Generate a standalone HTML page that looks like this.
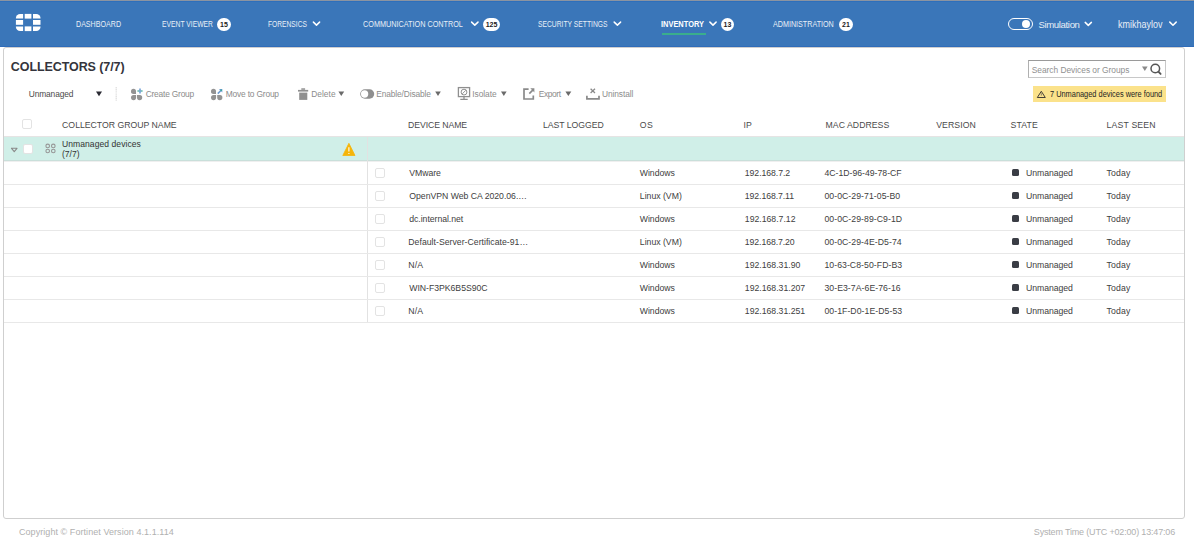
<!DOCTYPE html>
<html><head><meta charset="utf-8">
<style>
*{margin:0;padding:0;box-sizing:border-box}
html,body{width:1194px;height:540px;overflow:hidden;background:#fff;font-family:"Liberation Sans",sans-serif;color:#333}
.a{position:absolute;white-space:nowrap;line-height:1;transform-origin:0 0}
.s{position:absolute;display:block}
.badge{position:absolute;height:13px;border-radius:7px;background:#fff;color:#222;font-size:7px;font-weight:bold;text-align:center;line-height:13px;top:18px}
.cb{position:absolute;width:10px;height:10px;border:1px solid #e3e3e3;border-radius:2px;background:#fff}
.rl{position:absolute;left:4px;width:1180px;height:1px;background:#e8e8e8}
.sq{position:absolute;left:1012px;width:7px;height:7px;border-radius:1.5px;background:#3a3d45}
</style></head><body>
<div class="s" style="left:0;top:0;width:1194px;height:1px;background:#8b94a1"></div>
<div class="s" style="left:0;top:1px;width:1194px;height:46px;background:#3a76b9;border-top:1px solid #2e6fbb;border-bottom:1px solid #2f6cb9"></div>

<div class="badge" style="left:217px;width:14px">15</div>
<div class="badge" style="left:483px;width:17px">125</div>
<div class="badge" style="left:721px;width:13px">13</div>
<div class="badge" style="left:839px;width:14px">21</div>
<div class="s" style="left:662px;top:33px;width:44px;height:2px;background:#3aae8c"></div>
<div class="s" style="left:1008px;top:18px;width:25px;height:12px;border:1.6px solid #fff;border-radius:6px"></div>
<div class="s" style="left:1022px;top:20px;width:8px;height:8px;border-radius:4px;background:#fff"></div>

<div class="s" style="left:3px;top:47px;width:1182px;height:472px;border:1px solid #cfcfcf;border-radius:3px;background:#fff"></div>

<div class="s" style="left:1028px;top:60px;width:138px;height:18px;border:1px solid #c8c8c8;border-top-color:#9a9a9a;border-left-color:#b0b0b0"></div>
<div class="s" style="left:1033px;top:86px;width:133px;height:16px;background:#fbe28b"></div>

<div class="cb" style="left:22px;top:119px"></div>
<div class="s" style="left:4px;top:136px;width:1180px;height:1px;background:#e6e4e4"></div>
<div class="s" style="left:4px;top:137px;width:1180px;height:24px;background:#d0efe8;border-bottom:1px solid #c9dfda"></div>
<div class="s" style="left:4px;top:161px;width:1180px;height:1px;background:#efefef"></div>
<div class="s" style="left:367px;top:137px;width:1px;height:185px;background:#e2e2e2"></div>
<div class="cb" style="left:23px;top:144px"></div>
<div class="cb" style="left:375px;top:168px"></div>
<div class="sq" style="top:169px"></div>
<div class="rl" style="top:184px"></div>
<div class="cb" style="left:375px;top:191px"></div>
<div class="sq" style="top:192px"></div>
<div class="rl" style="top:207px"></div>
<div class="cb" style="left:375px;top:214px"></div>
<div class="sq" style="top:215px"></div>
<div class="rl" style="top:230px"></div>
<div class="cb" style="left:375px;top:237px"></div>
<div class="sq" style="top:238px"></div>
<div class="rl" style="top:253px"></div>
<div class="cb" style="left:375px;top:260px"></div>
<div class="sq" style="top:261px"></div>
<div class="rl" style="top:276px"></div>
<div class="cb" style="left:375px;top:283px"></div>
<div class="sq" style="top:284px"></div>
<div class="rl" style="top:299px"></div>
<div class="cb" style="left:375px;top:306px"></div>
<div class="sq" style="top:307px"></div>
<div class="rl" style="top:322px"></div>
<svg class="s" style="left:0;top:0" width="1194" height="540" viewBox="0 0 1194 540">
<g fill="#fff">
<path d="M15.90 18.60V18.10A4.2 4.2 0 0 1 20.10 13.90H23.10V18.60Z"/>
<rect x="24.70" y="13.90" width="6.70" height="4.70"/>
<path d="M33.00 13.90H36.30A4.2 4.2 0 0 1 40.50 18.10V18.60H33.00Z"/>
<rect x="15.90" y="20.00" width="7.20" height="4.80"/>
<rect x="33.00" y="20.00" width="7.50" height="4.80"/>
<path d="M15.90 26.40H23.10V31.10H20.10A4.2 4.2 0 0 1 15.90 26.90Z"/>
<rect x="24.70" y="26.40" width="6.70" height="4.70"/>
<path d="M33.00 26.40H40.50V26.90A4.2 4.2 0 0 1 36.30 31.10H33.00Z"/>
</g>
<g fill="none" stroke="#fff" stroke-width="1.5" stroke-linecap="round" stroke-linejoin="round">
<path d="M313.4 22.1L316.5 25.1L319.6 22.1"/>
<path d="M471.6 22.1L474.8 25.1L478 22.1"/>
<path d="M614.2 22.1L617.4 25.1L620.6 22.1"/>
<path d="M709.9 22.1L713 25.1L716.1 22.1"/>
<path d="M1085.2 22.4L1088.3 25.4L1091.4 22.4"/>
<path d="M1169.8 22.1L1173 25.2L1176.2 22.1"/>
</g>
<!-- unmanaged dropdown triangle -->
<path d="M96 91.5H102L99 96.2Z" fill="#2a2a33"/>
<line x1="116.2" y1="87" x2="116.2" y2="101.5" stroke="#dcdcdc" stroke-width="1.2" stroke-dasharray="1.2 0.6"/>
<!-- create group -->
<g fill="#939393">
<path d="M131 91.3A2.5 2.5 0 0 1 136 91.3V94H133.5A2.5 2.5 0 0 1 131 91.3Z"/>
<path d="M131 97.6A2.6 2.6 0 0 1 133.6 95H136.1V97.6A2.4 2.4 0 0 1 131 97.6Z"/>
<path d="M137 95H139.6A2.5 2.5 0 0 1 142.2 97.6A2.5 2.5 0 0 1 137 97.6Z"/>
</g>
<path d="M137.4 91H142.6" stroke="#5fb5a8" stroke-width="1.5"/>
<path d="M140 88.4V93.6" stroke="#7aa6da" stroke-width="1.7"/>
<!-- move to group -->
<g fill="#939393">
<path d="M211 91.3A2.5 2.5 0 0 1 216 91.3V94H213.5A2.5 2.5 0 0 1 211 91.3Z"/>
<path d="M211 97.6A2.6 2.6 0 0 1 213.6 95H216.1V97.6A2.4 2.4 0 0 1 211 97.6Z"/>
<path d="M217.2 95H219.8A2.5 2.5 0 0 1 222.4 97.6A2.5 2.5 0 0 1 217.2 97.6Z"/>
</g>
<path d="M217.8 93.6L221.4 90" stroke="#6a9ad0" stroke-width="1.5"/>
<path d="M219 89.1H222.3V92.4Z" fill="#6a9ad0"/>
<circle cx="221.2" cy="90.2" r="0.8" fill="#2fae8a"/>
<!-- delete trash -->
<g fill="#8f8f8f">
<rect x="301.3" y="88.3" width="3.8" height="1.5"/>
<rect x="298" y="89.9" width="10.2" height="1.7"/>
<rect x="299.2" y="92.6" width="8.1" height="7.3"/>
</g>
<path d="M338.4 91.6H344.2L341.3 96Z" fill="#6a6a6a"/>
<!-- toggle -->
<rect x="360.2" y="89.3" width="14" height="9.4" rx="4.7" fill="#8f8f8f"/>
<circle cx="364.6" cy="94" r="3.65" fill="#fff"/>
<path d="M435.2 91.6H440.8L438 96Z" fill="#6a6a6a"/>
<!-- isolate monitor -->
<g fill="none" stroke="#8f8f8f">
<rect x="458.4" y="87.6" width="11.2" height="9" stroke-width="1.3"/>
<circle cx="464" cy="92.1" r="2.9" stroke-width="1"/>
<path d="M462.2 93.9L465.8 90.3" stroke-width="0.9"/>
<path d="M464 96.6V99.2M460.3 99.3H467.7" stroke-width="1.3"/>
</g>
<path d="M501 91.6H506.6L503.8 96Z" fill="#6a6a6a"/>
<!-- export -->
<g fill="none" stroke="#8a8a8a" stroke-width="1.7">
<path d="M528.6 89.2H524V99H533.3V95.6"/>
<path d="M529.3 93.6L533.3 89.6"/>
</g>
<path d="M530.3 88.3H534.4V92.4Z" fill="#8a8a8a"/>
<path d="M565.4 91.6H571.3L568.35 96Z" fill="#6a6a6a"/>
<!-- uninstall -->
<path d="M590.6 88.8L595 93M595 88.8L590.6 93" stroke="#8a8a8a" stroke-width="1.3"/>
<path d="M586.9 95.8V98.8H599V95.8" fill="none" stroke="#8a8a8a" stroke-width="1.7"/>
<!-- search -->
<path d="M1142 66.5H1147.6L1144.8 71Z" fill="#8a8a8a"/>
<circle cx="1155.3" cy="68.5" r="4.3" fill="none" stroke="#555" stroke-width="1.5"/>
<path d="M1158.4 71.7L1160.6 73.9" stroke="#555" stroke-width="1.9" stroke-linecap="round"/>
<!-- yellow warning -->
<path d="M1041.3 91.3L1045.3 97.5H1037.3Z" fill="none" stroke="#3a3630" stroke-width="0.95" stroke-linejoin="round"/>
<path d="M1041.3 93.3V95.6" stroke="#7a7060" stroke-width="0.9"/>
<!-- group row icons -->
<path d="M11.5 148.3H17L14.25 151.7Z" fill="none" stroke="#8a8a8a" stroke-width="1.1" stroke-linejoin="round"/>
<g fill="none" stroke="#979797" stroke-width="1.1">
<circle cx="47.7" cy="145.9" r="1.8"/>
<circle cx="53.3" cy="145.9" r="1.8"/>
<circle cx="47.7" cy="151" r="1.8"/>
<circle cx="53.3" cy="151" r="1.8"/>
</g>
<path d="M348.9 143.3L355 155.5H342.8Z" fill="#f5b50a" stroke="#f5b50a" stroke-width="0.8" stroke-linejoin="round"/>
<path d="M348.9 147.2V151.6M348.9 153V154" stroke="#fff" stroke-width="1.1"/>
</svg>
<div class="a" style="left:75.5px;top:20.48px;font-size:7.6px;color:#e8eff7;transform:scale(0.936,1.150)">DASHBOARD</div>
<div class="a" style="left:162.1px;top:20.48px;font-size:7.6px;color:#e8eff7;transform:scale(0.890,1.150)">EVENT VIEWER</div>
<div class="a" style="left:268.1px;top:20.48px;font-size:7.6px;color:#e8eff7;transform:scale(0.879,1.150)">FORENSICS</div>
<div class="a" style="left:363.4px;top:20.48px;font-size:7.6px;color:#e8eff7;transform:scale(0.956,1.150)">COMMUNICATION CONTROL</div>
<div class="a" style="left:537.8px;top:20.48px;font-size:7.6px;color:#e8eff7;transform:scale(0.888,1.150)">SECURITY SETTINGS</div>
<div class="a" style="left:661.4px;top:20.48px;font-size:7.6px;color:#ffffff;font-weight:bold;transform:scale(0.979,1.150)">INVENTORY</div>
<div class="a" style="left:773.0px;top:20.48px;font-size:7.6px;color:#e8eff7;transform:scale(0.944,1.150)">ADMINISTRATION</div>
<div class="a" style="left:1038.4px;top:20.08px;font-size:9.6px;color:#e8eff7;letter-spacing:-0.36px">Simulation</div>
<div class="a" style="left:1117.8px;top:19.08px;font-size:9.6px;color:#e8eff7;transform:scale(0.937,1.100)">kmikhaylov</div>
<div class="a" style="left:10.8px;top:60.50px;font-size:12.5px;color:#34343c;letter-spacing:-0.08px;font-weight:bold">COLLECTORS (7/7)</div>
<div class="a" style="left:311.2px;top:90.32px;font-size:8.4px;color:#8c8c8c;letter-spacing:0.04px">Delete</div>
<div class="a" style="left:28.8px;top:90.32px;font-size:8.4px;color:#4a4a4a;letter-spacing:-0.13px">Unmanaged</div>
<div class="a" style="left:145.7px;top:90.32px;font-size:8.4px;color:#8c8c8c;letter-spacing:-0.20px">Create Group</div>
<div class="a" style="left:225.8px;top:90.32px;font-size:8.4px;color:#8c8c8c;letter-spacing:-0.18px">Move to Group</div>
<div class="a" style="left:376.2px;top:90.32px;font-size:8.4px;color:#8c8c8c;letter-spacing:-0.12px">Enable/Disable</div>
<div class="a" style="left:472.3px;top:90.32px;font-size:8.4px;color:#8c8c8c;letter-spacing:-0.06px">Isolate</div>
<div class="a" style="left:538.8px;top:90.32px;font-size:8.4px;color:#8c8c8c;letter-spacing:-0.40px">Export</div>
<div class="a" style="left:602.0px;top:90.32px;font-size:8.4px;color:#8c8c8c;letter-spacing:-0.09px">Uninstall</div>
<div class="a" style="left:1031.7px;top:66.32px;font-size:8.4px;color:#909090;letter-spacing:-0.02px">Search Devices or Groups</div>
<div class="a" style="left:1049.6px;top:90.32px;font-size:8.4px;color:#222;transform:scale(0.883,1.000)">7 Unmanaged devices were found</div>
<div class="a" style="left:62.1px;top:121.26px;font-size:8.7px;color:#4a4a4a">COLLECTOR GROUP NAME</div>
<div class="a" style="left:408.0px;top:121.26px;font-size:8.7px;color:#4a4a4a;letter-spacing:-0.07px">DEVICE NAME</div>
<div class="a" style="left:543.0px;top:121.26px;font-size:8.7px;color:#4a4a4a;letter-spacing:-0.05px">LAST LOGGED</div>
<div class="a" style="left:639.8px;top:121.26px;font-size:8.7px;color:#4a4a4a;letter-spacing:0.36px">OS</div>
<div class="a" style="left:743.6px;top:121.26px;font-size:8.7px;color:#4a4a4a">IP</div>
<div class="a" style="left:825.6px;top:121.26px;font-size:8.7px;color:#4a4a4a;letter-spacing:0.04px">MAC ADDRESS</div>
<div class="a" style="left:936.2px;top:121.26px;font-size:8.7px;color:#4a4a4a;letter-spacing:0.09px">VERSION</div>
<div class="a" style="left:1010.6px;top:121.26px;font-size:8.7px;color:#4a4a4a;letter-spacing:0.13px">STATE</div>
<div class="a" style="left:1106.6px;top:121.26px;font-size:8.7px;color:#4a4a4a;letter-spacing:0.16px">LAST SEEN</div>
<div class="a" style="left:62.0px;top:140.29px;font-size:8.55px;color:#333;letter-spacing:0.06px">Unmanaged devices</div>
<div class="a" style="left:62.0px;top:150.29px;font-size:8.55px;color:#333">(7/7)</div>
<div class="a" style="left:19.0px;top:528.20px;font-size:9px;color:#b0b0b0;letter-spacing:0.06px">Copyright © Fortinet Version 4.1.1.114</div>
<div class="a" style="left:1033.8px;top:528.20px;font-size:9px;color:#b0b0b0;letter-spacing:-0.17px">System Time (UTC +02:00) 13:47:06</div>
<div class="a" style="left:744.8px;top:169.26px;font-size:8.7px;color:#404040;letter-spacing:-0.05px">192.168.7.2</div>
<div class="a" style="left:409.3px;top:169.26px;font-size:8.7px;color:#404040;letter-spacing:-0.07px">VMware</div>
<div class="a" style="left:639.8px;top:169.26px;font-size:8.7px;color:#404040;letter-spacing:-0.03px">Windows</div>
<div class="a" style="left:824.4px;top:169.26px;font-size:8.7px;color:#404040">4C-1D-96-49-78-CF</div>
<div class="a" style="left:1026.0px;top:169.26px;font-size:8.7px;color:#404040;letter-spacing:-0.07px">Unmanaged</div>
<div class="a" style="left:1106.6px;top:169.26px;font-size:8.7px;color:#404040;letter-spacing:0.13px">Today</div>
<div class="a" style="left:744.8px;top:192.26px;font-size:8.7px;color:#404040;letter-spacing:-0.08px">192.168.7.11</div>
<div class="a" style="left:409.3px;top:192.26px;font-size:8.7px;color:#404040;letter-spacing:-0.02px">OpenVPN Web CA 2020.06.…</div>
<div class="a" style="left:639.8px;top:192.26px;font-size:8.7px;color:#404040">Linux (VM)</div>
<div class="a" style="left:824.4px;top:192.26px;font-size:8.7px;color:#404040;letter-spacing:0.06px">00-0C-29-71-05-B0</div>
<div class="a" style="left:1026.0px;top:192.26px;font-size:8.7px;color:#404040;letter-spacing:-0.07px">Unmanaged</div>
<div class="a" style="left:1106.6px;top:192.26px;font-size:8.7px;color:#404040;letter-spacing:0.13px">Today</div>
<div class="a" style="left:744.8px;top:215.26px;font-size:8.7px;color:#404040">192.168.7.12</div>
<div class="a" style="left:409.3px;top:215.26px;font-size:8.7px;color:#404040;letter-spacing:-0.05px">dc.internal.net</div>
<div class="a" style="left:639.8px;top:215.26px;font-size:8.7px;color:#404040;letter-spacing:-0.03px">Windows</div>
<div class="a" style="left:824.4px;top:215.26px;font-size:8.7px;color:#404040;letter-spacing:0.06px">00-0C-29-89-C9-1D</div>
<div class="a" style="left:1026.0px;top:215.26px;font-size:8.7px;color:#404040;letter-spacing:-0.07px">Unmanaged</div>
<div class="a" style="left:1106.6px;top:215.26px;font-size:8.7px;color:#404040;letter-spacing:0.13px">Today</div>
<div class="a" style="left:744.8px;top:238.26px;font-size:8.7px;color:#404040;letter-spacing:-0.08px">192.168.7.20</div>
<div class="a" style="left:408.3px;top:238.26px;font-size:8.7px;color:#404040;letter-spacing:0.02px">Default-Server-Certificate-91…</div>
<div class="a" style="left:639.8px;top:238.26px;font-size:8.7px;color:#404040">Linux (VM)</div>
<div class="a" style="left:824.4px;top:238.26px;font-size:8.7px;color:#404040;letter-spacing:0.06px">00-0C-29-4E-D5-74</div>
<div class="a" style="left:1026.0px;top:238.26px;font-size:8.7px;color:#404040;letter-spacing:-0.07px">Unmanaged</div>
<div class="a" style="left:1106.6px;top:238.26px;font-size:8.7px;color:#404040;letter-spacing:0.13px">Today</div>
<div class="a" style="left:744.8px;top:261.26px;font-size:8.7px;color:#404040">192.168.31.90</div>
<div class="a" style="left:408.3px;top:261.26px;font-size:8.7px;color:#404040;letter-spacing:0.09px">N/A</div>
<div class="a" style="left:639.8px;top:261.26px;font-size:8.7px;color:#404040;letter-spacing:-0.03px">Windows</div>
<div class="a" style="left:824.4px;top:261.26px;font-size:8.7px;color:#404040;letter-spacing:0.06px">10-63-C8-50-FD-B3</div>
<div class="a" style="left:1026.0px;top:261.26px;font-size:8.7px;color:#404040;letter-spacing:-0.07px">Unmanaged</div>
<div class="a" style="left:1106.6px;top:261.26px;font-size:8.7px;color:#404040;letter-spacing:0.13px">Today</div>
<div class="a" style="left:744.8px;top:284.26px;font-size:8.7px;color:#404040">192.168.31.207</div>
<div class="a" style="left:409.3px;top:284.26px;font-size:8.7px;color:#404040;letter-spacing:-0.03px">WIN-F3PK6B5S90C</div>
<div class="a" style="left:639.8px;top:284.26px;font-size:8.7px;color:#404040;letter-spacing:-0.03px">Windows</div>
<div class="a" style="left:824.4px;top:284.26px;font-size:8.7px;color:#404040;letter-spacing:0.06px">30-E3-7A-6E-76-16</div>
<div class="a" style="left:1026.0px;top:284.26px;font-size:8.7px;color:#404040;letter-spacing:-0.07px">Unmanaged</div>
<div class="a" style="left:1106.6px;top:284.26px;font-size:8.7px;color:#404040;letter-spacing:0.13px">Today</div>
<div class="a" style="left:744.8px;top:307.26px;font-size:8.7px;color:#404040">192.168.31.251</div>
<div class="a" style="left:408.3px;top:307.26px;font-size:8.7px;color:#404040;letter-spacing:0.09px">N/A</div>
<div class="a" style="left:639.8px;top:307.26px;font-size:8.7px;color:#404040;letter-spacing:-0.03px">Windows</div>
<div class="a" style="left:824.4px;top:307.26px;font-size:8.7px;color:#404040;letter-spacing:0.06px">00-1F-D0-1E-D5-53</div>
<div class="a" style="left:1026.0px;top:307.26px;font-size:8.7px;color:#404040;letter-spacing:-0.07px">Unmanaged</div>
<div class="a" style="left:1106.6px;top:307.26px;font-size:8.7px;color:#404040;letter-spacing:0.13px">Today</div>
</body></html>
